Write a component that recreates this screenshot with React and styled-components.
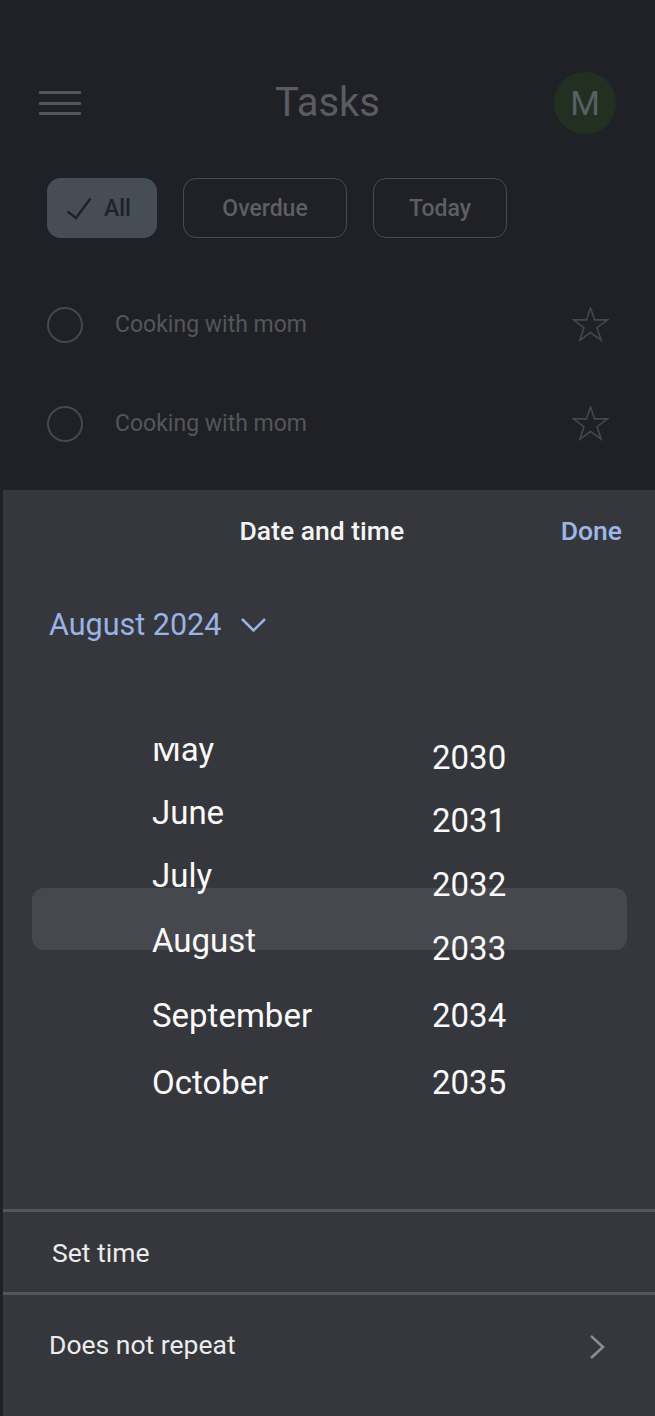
import React from "react";
import styled, { createGlobalStyle, css } from "styled-components";

const GlobalStyle = createGlobalStyle`
  html, body {
    margin: 0;
    padding: 0;
    background: #202126;
  }
  body {
    font-family: Roboto, "Noto Sans", "Liberation Sans", sans-serif;
    -webkit-font-smoothing: antialiased;
  }
  * { box-sizing: border-box; }
`;

const Screen = styled.div`
  width: 655px;
  height: 1416px;
  overflow: hidden;
  display: flex;
  flex-direction: column;
  background: #202126;
`;

const Backdrop = styled.div`
  height: 490px;
  flex-shrink: 0;
  display: flex;
  flex-direction: column;
`;

const Header = styled.header`
  display: grid;
  grid-template-columns: 1fr auto 1fr;
  align-items: center;
  height: 134px;
  padding: 72px 39px 0;
`;

const Menu = styled.div`
  justify-self: start;
  width: 42px;
  display: flex;
  flex-direction: column;
  gap: 7.5px;
`;

const Bar = styled.span`
  display: block;
  height: 3px;
  border-radius: 1px;
  background: #55575c;
`;

const Title = styled.h1`
  margin: 0;
  font-size: 40px;
  font-weight: 400;
  line-height: 1;
  color: #5a5c61;
`;

const Avatar = styled.div`
  justify-self: end;
  width: 62px;
  height: 62px;
  border-radius: 50%;
  background: #223022;
  display: flex;
  align-items: center;
  justify-content: center;
  font-size: 34px;
  color: #5b5e63;
`;

const Chips = styled.div`
  display: flex;
  gap: 26px;
  padding: 44px 0 0 47px;
`;

const Chip = styled.button`
  height: 60px;
  width: ${(p) => p.$w}px;
  border-radius: 13px;
  display: flex;
  align-items: center;
  justify-content: center;
  gap: 12px;
  font-family: inherit;
  font-size: 23px;
  font-weight: 500;
  padding: 0;
  ${(p) =>
    p.$active
      ? css`
          justify-content: flex-start;
          padding-left: 18px;
          background: #464d55;
          color: #202227;
          border: 1.5px solid #464d55;
        `
      : css`
          background: transparent;
          color: #5d5f64;
          border: 1.5px solid #4a4c51;
        `}
`;

const TaskList = styled.ul`
  list-style: none;
  margin: 37px 0 0;
  padding: 0;
`;

const TaskRow = styled.li`
  height: 99px;
  display: flex;
  align-items: center;
  gap: 32px;
  padding: 0 46px 0 47px;
`;

const Radio = styled.span`
  width: 36px;
  height: 36px;
  flex-shrink: 0;
  border-radius: 50%;
  border: 2.5px solid #46474b;
`;

const TaskText = styled.span`
  flex: 1;
  font-size: 23px;
  color: #54565a;
`;

const Sheet = styled.section`
  flex: 1;
  min-height: 0;
  margin-left: 3px;
  background: #36373c;
  display: flex;
  flex-direction: column;
`;

const SheetHeader = styled.div`
  display: flex;
  align-items: baseline;
  padding: 25px 33px 0 80px;
`;

const SheetTitle = styled.h2`
  flex: 1;
  margin: 0;
  text-align: center;
  font-size: 26.5px;
  font-weight: 500;
  line-height: normal;
  color: #f4f4f4;
`;

const DoneButton = styled.button`
  background: none;
  border: none;
  padding: 0;
  font-family: inherit;
  font-size: 26.5px;
  font-weight: 500;
  line-height: normal;
  color: #9db8e8;
`;

const MonthToggle = styled.div`
  display: flex;
  align-items: center;
  gap: 19px;
  margin-top: 61px;
  padding-left: 46px;
  font-size: 30.5px;
  line-height: normal;
  color: #98b3e6;
`;

const Picker = styled.div`
  position: relative;
  flex: 1;
  min-height: 0;
  margin-top: 101px;
  overflow: hidden;
  display: grid;
  grid-template-columns: 280px auto;
  align-items: start;
  padding-left: 149px;
`;

const Highlight = styled.div`
  position: absolute;
  top: 145px;
  left: 29px;
  right: 28px;
  height: 62px;
  border-radius: 12px;
  background: #47484d;
`;

const WheelColumn = styled.div`
  position: relative;
  display: flex;
  flex-direction: column;
`;

const WheelItem = styled.div`
  height: 30px;
  line-height: 30px;
  margin-top: ${(p) => p.$mt}px;
  font-size: 33px;
  color: #fafafa;
  white-space: nowrap;
`;

const Divider = styled.hr`
  margin: 0;
  border: none;
  height: 3px;
  flex-shrink: 0;
  background: #55575c;
`;

const OptionRow = styled.div`
  height: ${(p) => p.$h}px;
  flex-shrink: 0;
  display: flex;
  align-items: ${(p) => (p.$top ? "flex-start" : "center")};
  justify-content: space-between;
  padding: ${(p) => p.$pad};
  font-size: 26.5px;
  line-height: normal;
  color: #ececec;
`;

const RowChevron = styled.svg`
  margin-top: 5px;
  flex-shrink: 0;
`;

const months = [
  ["May", -8],
  ["June", 33],
  ["July", 33],
  ["August", 35],
  ["September", 45],
  ["October", 37],
];

const years = [
  ["2030", 0],
  ["2031", 33],
  ["2032", 34],
  ["2033", 34],
  ["2034", 37],
  ["2035", 37],
];

const StarIcon = () => (
  <svg width="37" height="35" viewBox="-0.5 -0.5 37 35" fill="none">
    <polygon
      points="18,0.5 22.1,12.4 35.1,12.4 24.6,20.2 28.6,32.6 18,25 7.4,32.6 11.4,20.2 0.9,12.4 13.9,12.4"
      stroke="#46474b"
      strokeWidth="1.6"
      strokeLinejoin="miter"
    />
  </svg>
);

const CheckIcon = () => (
  <svg width="26" height="23" viewBox="0 0 26 23" fill="none">
    <polyline
      points="1.5,14.5 10,21 24.5,1.5"
      stroke="#202227"
      strokeWidth="2.6"
    />
  </svg>
);

const tasks = ["Cooking with mom", "Cooking with mom"];

export default function App() {
  return (
    <>
      <GlobalStyle />
      <Screen>
        <Backdrop>
          <Header>
            <Menu>
              <Bar />
              <Bar />
              <Bar />
            </Menu>
            <Title>Tasks</Title>
            <Avatar>M</Avatar>
          </Header>
          <Chips>
            <Chip $active $w={110}>
              <CheckIcon />
              All
            </Chip>
            <Chip $w={164}>Overdue</Chip>
            <Chip $w={134}>Today</Chip>
          </Chips>
          <TaskList>
            {tasks.map((t, i) => (
              <TaskRow key={i}>
                <Radio />
                <TaskText>{t}</TaskText>
                <StarIcon />
              </TaskRow>
            ))}
          </TaskList>
        </Backdrop>

        <Sheet>
          <SheetHeader>
            <SheetTitle>Date and time</SheetTitle>
            <DoneButton>Done</DoneButton>
          </SheetHeader>
          <MonthToggle>
            August 2024
            <svg width="27" height="16" viewBox="0 0 27 16" fill="none">
              <polyline
                points="2,2 13.5,13.5 25,2"
                stroke="#98b3e6"
                strokeWidth="2.5"
              />
            </svg>
          </MonthToggle>
          <Picker>
            <Highlight />
            <WheelColumn>
              {months.map(([m, mt]) => (
                <WheelItem key={m} $mt={mt}>
                  {m}
                </WheelItem>
              ))}
            </WheelColumn>
            <WheelColumn>
              {years.map(([y, mt]) => (
                <WheelItem key={y} $mt={mt}>
                  {y}
                </WheelItem>
              ))}
            </WheelColumn>
          </Picker>
          <Divider />
          <OptionRow $h={80} $pad="0 0 0 49px">
            Set time
          </OptionRow>
          <Divider />
          <OptionRow $h={121} $top $pad="34px 50px 0 46px">
            Does not repeat
            <RowChevron width="16" height="26" viewBox="0 0 16 26" fill="none">
              <polyline
                points="2,2 14,13 2,24"
                stroke="#8b8d91"
                strokeWidth="2.5"
              />
            </RowChevron>
          </OptionRow>
        </Sheet>
      </Screen>
    </>
  );
}
